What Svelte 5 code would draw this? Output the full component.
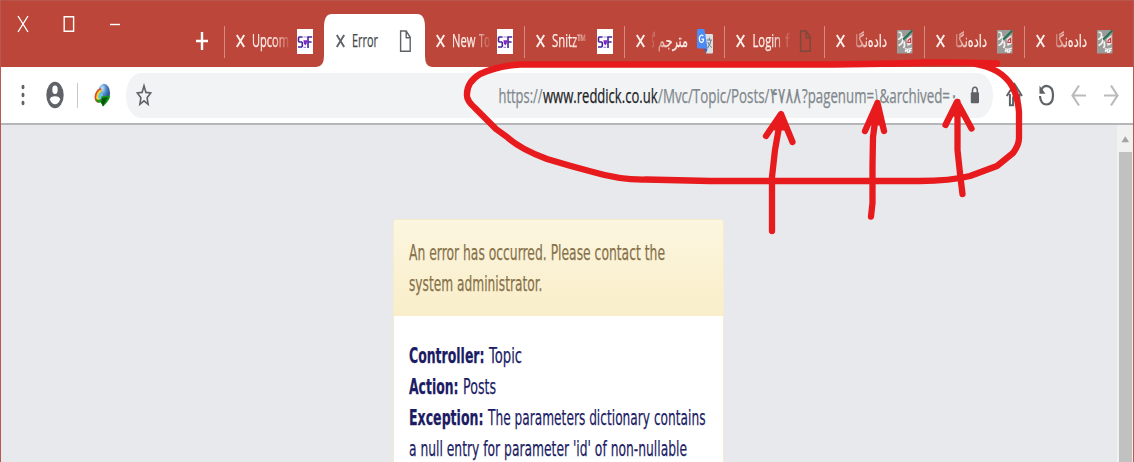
<script>
  const tabs = [
    { runs: [{ t: 'Upcom', x: 0, w: 37 }], icon: 'sf', fade: true },
    { runs: [{ t: 'Error', x: 0, w: 26 }], icon: 'doc', active: true },
    { runs: [{ t: 'New', x: 0, w: 23.5 }, { t: 'To', x: 27, w: 11 }], icon: 'sf', fade: true },
    { runs: [{ t: 'Snitz™', x: 0, w: 34 }], icon: 'sf', fade: true },
    { runs: [{ t: 'مترجم', x: 6, w: 30, fa: true }, { t: 'گ', x: -4, w: 7, fa: true }], icon: 'translate', fadeLeft: true },
    { runs: [{ t: 'Login', x: 0.5, w: 28.5 }, { t: 'f', x: 33.5, w: 4 }], icon: 'doc', fade: true },
    { runs: [{ t: 'داده‌نگا', x: 3, w: 32, fa: true }], icon: 'pen', fadeLeft: true },
    { runs: [{ t: 'داده‌نگا', x: 3, w: 32, fa: true }], icon: 'pen', fadeLeft: true },
    { runs: [{ t: 'داده‌نگا', x: 3, w: 32, fa: true }], icon: 'pen', fadeLeft: true }
  ];

  const url = [
    { t: 'https://', x: 0.5, w: 44 },
    { t: 'www.reddick.co.uk', x: 45, w: 114.5, c: 'host' },
    { t: '/Mvc/Topic/Posts/', x: 160, w: 111.5 },
    { t: '۴۷۸۸', x: 272, w: 31, fa: true, c: 'digits' },
    { t: '?pagenum=', x: 304, w: 72 },
    { t: '۱', x: 376, w: 5, fa: true, c: 'digits' },
    { t: '&archived=', x: 381.5, w: 70.5 },
    { t: '۰', x: 452, w: 8, fa: true, c: 'digits' }
  ];

  const message = [
    [{ t: 'An error has occurred. Please contact the', x: 0, w: 256 }],
    [{ t: 'system administrator.', x: 0, w: 133.5 }]
  ];

  const details = [
    [{ t: 'Controller:', x: 0, w: 75.5, c: 'bold' }, { t: 'Topic', x: 80, w: 33 }],
    [{ t: 'Action:', x: 0, w: 49.5, c: 'bold' }, { t: 'Posts', x: 54, w: 33 }],
    [{ t: 'Exception:', x: 0, w: 74.5, c: 'bold' }, { t: 'The parameters dictionary contains', x: 79, w: 217.5 }],
    [{ t: "a null entry for parameter 'id' of non-nullable", x: 0, w: 278 }]
  ];
</script>

{#snippet line(runs, width, height, base)}
  <svg class="line" {width} {height}>
    {#each runs as r}
      <text x={r.x} y={base} textLength={r.w} lengthAdjust="spacingAndGlyphs" class={[r.c, r.fa && 'fa']}>{r.t}</text>
    {/each}
  </svg>
{/snippet}

{#snippet favicon(kind)}
  <svg class="favicon" width="16" height="26" viewBox="0 0 16 26">
    {#if kind === 'sf'}
      <rect width="16" height="25" y="1" fill="#fff" />
      <path d="M5.6 9H2.2L1.5 9.8v3.4l.8.8h2.2l.8.8v3.4l-.8.8H1M11 20V9h4.200M11 14h3.600" fill="none" stroke="#4424a0" stroke-width="1.6" />
      <path d="M6.400 12.200h3.800l-.5 3.300-1.400 2-1.400-2z" fill="#7d26c2" />
      <path d="M6.5 9h3.500M6.500 19.400h2.600" stroke="#a78fd6" stroke-width="1.2" />
    {:else if kind === 'doc'}
      <path d="M3.6 3h5.600l4 6.300V23.200H3.600zM9.200 3v6.800h4" fill="none" stroke="currentColor" stroke-width="1.4" />
    {:else if kind === 'translate'}
      <path d="M7 6h8q1 0 1 1.200V24q0 1.500-1 1.500H9z" fill="#dcdfe2" />
      <path d="M1 1h6.400l3.200 19.500H1q-1 0-1-1.500V2.500Q0 1 1 1z" fill="#4c8bf5" />
      <path d="M7.400 20.500h3.200L9 25.500z" fill="#3460c0" />
      <path d="M6.300 8.200Q5.500 7 4.300 7.200 2.300 7.800 2.300 10.800T4.300 14.400Q6.500 14.600 6.500 11.200H4.400" fill="none" stroke="#fff" stroke-width="1.2" />
      <path d="M9.800 12h5M12.300 9.700V12M14 12q-.7 5-3.500 8M10.800 14q1.200 3.800 4 5.500" fill="none" stroke="#647780" stroke-width="1" />
    {:else}
      <rect y="2" width="15.500" height="23.500" fill="#9b9c9a" />
      <path d="M1.500 4.500q3-1 3 2.500T1 11.500M5.500 8.500q1.500 7-4 9M7 13.500q1.500 4-.5 6.500" fill="none" stroke="#f3f3f0" stroke-width="1.700" />
      <path d="M8 20.500q3 1.500 7-.500M8.500 24v-1.500h2V24h2v-1.500h2" fill="none" stroke="#f3f3f0" stroke-width="1.300" />
      <path d="M9.500 11l5-4v9l-4 2z" fill="#f1e9e8" />
      <path d="M10.800 14.500l.5-2.500 2.200-1.500v4z" fill="none" stroke="#d23a40" stroke-width="1.200" />
      <path d="M6 11.500l3.500-3L15.300 2.500" stroke="#267253" stroke-width="2.200" fill="none" />
    {/if}
  </svg>
{/snippet}

<div class="window">
  <header class="titlebar">
    <div class="controls">
      <svg width="12" height="18" viewBox="0 0 12 18"><path d="M1 1l10 16M11 1L1 17" /></svg>
      <svg width="12" height="18" viewBox="0 0 12 18"><path d="M1.200 1.700h9.400v14.600H1.200z" /></svg>
      <svg width="12" height="18" viewBox="0 0 12 18"><path d="M1 9.500h10" /></svg>
    </div>
    <svg class="plus" width="14" height="20" viewBox="0 0 14 20"><path d="M7 1v18M1 10h12" /></svg>
    <div class="tabs">
      {#each tabs as tab, i}
        <div class="tab" class:active={tab.active} class:divided={i !== 1 && i !== 2}>
          {#if tab.active}
            <svg class="shape" width="116" height="54" viewBox="0 0 116 54">
              <path d="M0 54V53Q8 53 8 42V13Q8 0 16 0H101Q109 0 109 13V42Q109 53 116 53V54Z" fill="#fff" />
            </svg>
          {/if}
          <svg class="close" width="9" height="14" viewBox="0 0 9 14"><path d="M.8 1l7.400 12M8.200 1L.8 13" /></svg>
          <div class="title" class:fade={tab.fade} class:fade-left={tab.fadeLeft}>{@render line(tab.runs, 38, 28, 19.5)}</div>
          {@render favicon(tab.icon)}
        </div>
      {/each}
    </div>
  </header>

  <div class="toolbar">
    <svg class="dots" width="4" height="22" viewBox="0 0 4 22"><g fill="#5f6368"><ellipse cx="2" cy="3" rx="1.500" ry="2.200" /><ellipse cx="2" cy="11" rx="1.500" ry="2.200" /><ellipse cx="2" cy="19" rx="1.500" ry="2.200" /></g></svg>
    <svg class="user" width="18" height="28" viewBox="0 0 18 28">
      <ellipse cx="9" cy="14" rx="8.700" ry="13.200" fill="#5f6368" />
      <ellipse cx="9" cy="8.800" rx="2.700" ry="4.200" fill="#fff" />
      <path d="M3.800 18.500Q4.500 15.300 9 15.300T14.200 18.500Q12.300 23.300 9 23.300T3.800 18.500z" fill="#fff" />
    </svg>
    <i class="rule"></i>
    <svg class="globe" width="18" height="24" viewBox="0 0 18 24">
      <defs>
        <radialGradient id="ball" cx=".35" cy=".25" r=".8"><stop offset="0" stop-color="#c8e5fa" /><stop offset=".45" stop-color="#4d86c6" /><stop offset="1" stop-color="#173b78" /></radialGradient>
      </defs>
      <ellipse cx="11" cy="10" rx="6" ry="9.200" fill="url(#ball)" />
      <path d="M8 5Q2 7 1.500 14q0 5 4 6l4-6z" fill="#d94b22" />
      <path d="M8.500 6.500Q3.800 8 3.200 14q0 4 3 5l3-6z" fill="#f3d536" />
      <path d="M9 8Q5.500 10 5 14l2 3 3-4z" fill="#65c4d8" />
      <path d="M2 15.500q3 2.500 7 0l-1-2 9-1q0 4-3 7l-4 4-2-4q-4 1-6-4z" fill="#159a1c" />
      <path d="M9 15l6-1-5 9.500-2-4z" fill="#07580d" />
    </svg>
    <div class="omnibox">
      <svg class="star" width="16" height="24" viewBox="0 0 16 24"><path d="M8 2.800l1.900 6.600 4.800.5-3.600 4.800 1 6.600L8 17.800l-4.100 3.500 1-6.600L1.300 9.900l4.800-.5z" fill="none" stroke="#5f6368" stroke-width="1.600" /></svg>
      <div class="url">{@render line(url, 462, 32, 24)}</div>
      <svg class="lock" width="10" height="18" viewBox="0 0 10 18"><rect x=".8" y="6.300" width="8.200" height="11" rx="1" fill="#5f6368" /><path d="M2.500 7V4.200Q2.700 1.200 4.900 1.200T7.300 4.200V7" fill="none" stroke="#5f6368" stroke-width="1.500" /></svg>
    </div>
    <nav>
      <svg width="18" height="28" viewBox="0 0 18 28"><path d="M1.700 15L9.500 3l7.500 12M4.900 13V24.300h3.200v-7.800h3v7.800h3.200V13" fill="none" stroke="#5f6368" stroke-width="2" /></svg>
      <svg width="18" height="28" viewBox="0 0 18 28"><path d="M3 15Q3.600 23.500 9.600 23.500 16 23 16 14.200T9.600 4.800Q5.800 4.800 3.600 9.800" fill="none" stroke="#5f6368" stroke-width="2.200" /><path d="M2.500 4.500v8.300h6z" fill="#5f6368" /></svg>
      <svg width="18" height="28" viewBox="0 0 18 28"><path d="M17 14.500H3.800M10 4.500L3.500 14.500 10 24.500" fill="none" stroke="#b9bbbd" stroke-width="2.200" /></svg>
      <svg width="18" height="28" viewBox="0 0 18 28"><path d="M3 14.500h13.200M10 4.500l6.500 10L10 24.500" fill="none" stroke="#b9bbbd" stroke-width="2.200" /></svg>
    </nav>
  </div>

  <main>
    <section class="card">
      <div class="card-head">
        {#each message as runs}{@render line(runs, 300, 31, 22)}{/each}
      </div>
      <div class="card-body">
        {#each details as runs}{@render line(runs, 300, 31, 22)}{/each}
      </div>
    </section>
    <div class="scrollbar">
      <svg width="16" height="27" viewBox="0 0 16 27"><path d="M4.500 17.200L8.300 11.200l3.800 6z" fill="#a3a3a3" /></svg>
      <div class="thumb"></div>
    </div>
  </main>

  <svg class="ink" width="1134" height="462" viewBox="0 0 1134 462">
    <path d="M997 63.500Q960 62 926 62.500Q870 64.500 800 64.500H520Q498 66 480 74Q467 82 467 94Q466 100 475 108L496 129L507 137Q520 149 547 159Q570 166 593 172Q620 180 646 179.500L710 181H920Q950 181 970 176L997 166L1013 153Q1019 145 1019 138V112Q1018 97 1012 86Q1001 68 975 64" />
    <path d="M772 231V177L775 150L781 116M766 136L781 114L792.500 142" />
    <path d="M871 216.500L872.500 203V165L873 137L877.500 103M865 131L877.500 103L884 131" />
    <path d="M962.500 194L960.500 178L957.500 150V102M945.500 125L957 102L971.500 128.500" />
    <path class="tip" d="M781.500 114l-7 15h14zM877.500 105l-7 19h11zM957 102l-5 13h12z" />
  </svg>
</div>

<style>
  :global(body) { margin: 0; overflow: hidden; }
  .window {
    position: relative;
    box-sizing: border-box;
    width: 1134px;
    height: 462px;
    display: flex;
    flex-direction: column;
    border-left: 1px solid #b85850;
    border-right: 1px solid #b85850;
    overflow: hidden;
    font-family: "Open Sans", "DejaVu Sans", sans-serif;
  }
  svg { display: block; flex: none; }
  .line { overflow: visible; fill: currentColor; stroke: currentColor; stroke-width: 0.25px; }
  .fa { font-family: "DejaVu Sans", sans-serif; }
  .digits { font-size: 22px; }

  .titlebar {
    box-sizing: border-box;
    height: 67px;
    display: flex;
    background: #bb4639;
    border-top: 1px solid #b9564b;
    flex: none;
  }
  .controls { display: flex; gap: 34px; padding: 14px 0 0 16px; width: 178px; box-sizing: border-box; }
  .controls path { fill: none; stroke: #fff; stroke-width: 1.4; }
  .plus { margin: 30px 15px 0 16px; }
  .plus path { stroke: #fff; stroke-width: 2.4; }
  .tabs { display: flex; }
  .tab {
    position: relative;
    box-sizing: border-box;
    width: 100px;
    height: 66px;
    padding: 14px 0 0 12px;
    display: flex;
    align-items: center;
    color: #fdeeea;
  }
  .tab.divided::before {
    content: "";
    position: absolute;
    left: 0;
    top: 25px;
    width: 1px;
    height: 32px;
    background: #d68a82;
  }
  .tab > svg, .title { position: relative; }
  .tab .shape { position: absolute; left: -8px; top: 13px; }
  .close path { stroke: #fdeeea; stroke-width: 1.9; }
  .title { width: 38px; height: 28px; margin-left: 7px; font-size: 17.5px; }
  .fade { mask-image: linear-gradient(to right, #000 55%, transparent 105%); }
  .fade-left { mask-image: linear-gradient(to left, #000 55%, transparent 110%); }
  .favicon { margin-left: 7px; color: #7b4940; }
  .active { color: #45494d; }
  .active .close path { stroke: #5f6368; }
  .active .favicon { color: #5f6368; }

  .toolbar {
    box-sizing: border-box;
    height: 58px;
    flex: none;
    display: flex;
    align-items: center;
    background: #fff;
    border-bottom: 2px solid #b5b6b8;
    padding-left: 20px;
  }
  .user { margin-left: 21px; }
  .rule { width: 1px; height: 25px; background: #c6c8ca; margin: 0 15px 0 13px; }
  .omnibox {
    box-sizing: border-box;
    width: 867px;
    height: 45px;
    margin-left: 15px;
    padding: 0 13px 0 10px;
    display: flex;
    align-items: center;
    justify-content: flex-end;
    background: #f1f3f4;
    border-radius: 15px / 22px;
  }
  .star { margin-right: auto; }
  .url { font-size: 19.5px; color: #80868b; margin-right: 10px; }
  .host { fill: #202124; stroke: #202124; }
  nav { display: flex; gap: 14px; margin-left: 12px; }

  main { flex: 1; display: flex; background: #e8e9ed; min-height: 0; }
  .card {
    box-sizing: border-box;
    width: 331px;
    height: 400px;
    margin: 94px 0 0 392px;
    border: 1px solid #f6ebcb;
    border-radius: 4px;
    background: #fff;
    overflow: hidden;
    font-family: "DejaVu Sans", sans-serif;
    font-size: 22px;
    flex: none;
  }
  .card-head {
    box-sizing: border-box;
    height: 96px;
    padding: 18px 15px;
    background: linear-gradient(#fcf6e0, #f9eec9);
    color: #87714a;
  }
  .card-body { padding: 25px 15px; color: #1c1c64; }
  .bold { font-weight: bold; }
  .scrollbar { width: 16px; margin-left: auto; background: #f1f1f1; display: flex; flex-direction: column; }
  .thumb { flex: 1; margin: 0 1px 0 2px; background: #c1c1c1; }

  .ink {
    position: absolute;
    left: -1px;
    top: 0;
    fill: none;
    stroke: #e71b1d;
    stroke-width: 6.3;
    stroke-linecap: round;
    stroke-linejoin: round;
  }
  .tip { fill: #e71b1d; stroke-width: 3; }
</style>
